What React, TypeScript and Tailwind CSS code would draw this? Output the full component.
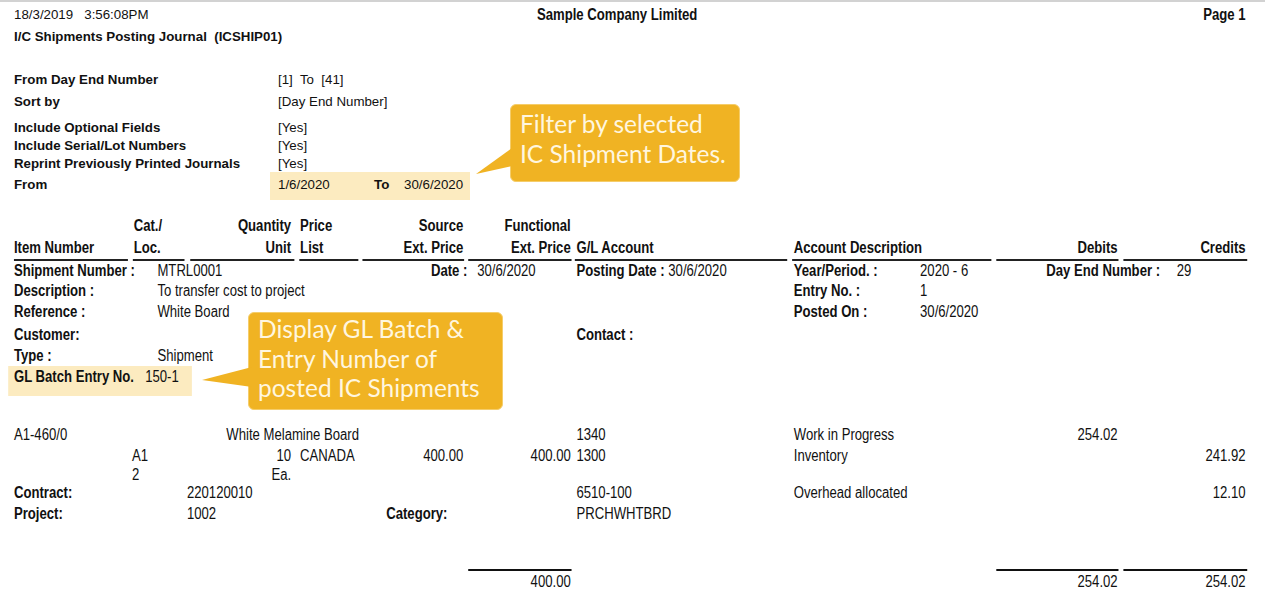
import { clsx } from 'clsx'
import type { ReactNode } from 'react'

// The journal table is set in a narrow face: the block is laid out at 1/0.82 of the
// page width and squeezed back with scale-x, so every x below is reference x / 0.82.
const COLS = [
  'w-[139px] mr-[6px] text-left',
  'w-[63px] mr-[7px] text-left pl-[1px]',
  'w-[127px] mr-[6px] text-right pr-[4px]',
  'w-[72px] mr-[5px] text-left pl-[1px]',
  'w-[124px] mr-[5px] text-right pr-[1px]',
  'w-[126px] mr-[4px] text-right pr-[1px]',
  'w-[259px] mr-[6px] text-left pl-[2px]',
  'w-[243px] mr-[6px] text-left pl-[2px]',
  'w-[149px] mr-[6px] text-right pr-[1px]',
  'w-[151px] text-right pr-[2px]',
]

const HEADER: [string, string][] = [
  ['\u00a0', 'Item Number'],
  ['Cat./', 'Loc.'],
  ['Quantity', 'Unit'],
  ['Price', 'List'],
  ['Source', 'Ext. Price'],
  ['Functional', 'Ext. Price'],
  ['\u00a0', 'G/L Account'],
  ['\u00a0', 'Account Description'],
  ['\u00a0', 'Debits'],
  ['\u00a0', 'Credits'],
]

function B({ children }: { children: ReactNode }) {
  return <span className="font-bold">{children}</span>
}

function Cols({ cells, className, lines = [] }: { cells: ReactNode[]; className?: string; lines?: number[] }) {
  return (
    <div className={clsx('flex shrink-0 pl-[17px] leading-[18px]', className)}>
      {COLS.map((col, i) => (
        <div
          key={i}
          className={clsx(col, 'shrink-0 whitespace-nowrap', lines.includes(i) && 'border-t-2 border-[#111] pt-[2px]')}
        >
          {cells[i] ?? ''}
        </div>
      ))}
    </div>
  )
}

function Param({ label, children, className }: { label: string; children: ReactNode; className?: string }) {
  return (
    <div className={clsx('flex shrink-0 pl-[14px]', className)}>
      <div className="w-[264px] font-bold">{label}</div>
      <div className="whitespace-pre">{children}</div>
    </div>
  )
}

function Callout({ lines, className }: { lines: string[]; className: string }) {
  return (
    <div
      className={clsx(
        'absolute rounded-[6px] border border-[#f5cd6a] bg-[#f0b323] pl-[9px] font-["Lato",sans-serif] text-[24.5px] leading-[29.5px] text-[#fff6df]',
        className,
      )}
    >
      {lines.map((line) => (
        <div key={line} className="whitespace-nowrap">
          {line}
        </div>
      ))}
    </div>
  )
}

export default function App() {
  return (
    <div className="relative flex h-[591px] w-[1265px] flex-col overflow-hidden bg-white text-[#111]">
      <div className="h-[2px] shrink-0 bg-[#d2d2d2]" />

      {/* report heading */}
      <div className="flex h-[26px] shrink-0 items-start pt-[4px] pl-[14px] pr-[19px] leading-[18px]">
        <div className="w-[523px] whitespace-pre font-['Liberation_Sans',sans-serif] text-[13.3px]">18/3/2019   3:56:08PM</div>
        <div className="font-['Liberation_Sans',sans-serif] text-[16px] font-bold">
          <span className="inline-block origin-left scale-x-[0.82] whitespace-nowrap">Sample Company Limited</span>
        </div>
        <div className="flex-1 text-right font-['Liberation_Sans',sans-serif] text-[16px] font-bold">
          <span className="inline-block origin-right scale-x-[0.82]">Page 1</span>
        </div>
      </div>

      <div className="flex shrink-0 flex-col font-['Liberation_Sans',sans-serif] text-[13.3px] leading-[18px]">
        <div className="h-[43px] whitespace-pre pl-[14px] font-bold">I/C Shipments Posting Journal  (ICSHIP01)</div>
        <Param label="From Day End Number" className="h-[22px]">
          [1]  To  [41]
        </Param>
        <Param label="Sort by" className="h-[26px]">
          [Day End Number]
        </Param>
        <Param label="Include Optional Fields" className="h-[18px]">
          [Yes]
        </Param>
        <Param label="Include Serial/Lot Numbers" className="h-[18px]">
          [Yes]
        </Param>
        <Param label="Reprint Previously Printed Journals" className="h-[17px]">
          [Yes]
        </Param>
        <div className="flex h-[43px] shrink-0 pl-[14px]">
          <div className="w-[256px] pt-[4px] font-bold">From</div>
          <div className="flex h-[28px] w-[200px] bg-[#fcebc0] pt-[4px] pl-[8px]">
            <span className="w-[96px]">1/6/2020</span>
            <span className="w-[30px] font-bold">To</span>
            <span>30/6/2020</span>
          </div>
        </div>
      </div>

      {/* journal table */}
      <div className="flex w-[1543px] shrink-0 origin-top-left scale-x-[0.82] flex-col font-['Liberation_Sans',sans-serif] text-[16px]">
        <div className="flex h-[47px] shrink-0 pl-[17px] font-bold leading-[22px]">
          {HEADER.map(([top, bottom], i) => (
            <div key={i} className={clsx(COLS[i], 'h-[46px] shrink-0 whitespace-nowrap border-b-2 border-[#222]')}>
              <div>{top}</div>
              <div>{bottom}</div>
            </div>
          ))}
        </div>

        <Cols
          className="h-[20px]"
          cells={[
            <B>Shipment Number :</B>,
            <span className="pl-[29px]">MTRL0001</span>,
            '',
            '',
            <div className="-mr-[5px] font-bold">Date :</div>,
            <div className="pl-[11px] text-left">30/6/2020</div>,
            <span>
              <B>Posting Date :</B> 30/6/2020
            </span>,
            <div className="flex">
              <span className="w-[154px] font-bold">Year/Period. :</span>
              <span>2020 - 6</span>
            </div>,
            <div className="pl-[61px] text-left font-bold">Day End Number :</div>,
            <div className="pl-[65px] text-left">29</div>,
          ]}
        />
        <Cols
          className="h-[21px]"
          cells={[
            <B>Description :</B>,
            <span className="pl-[29px]">To transfer cost to project</span>,
            '',
            '',
            '',
            '',
            '',
            <div className="flex">
              <span className="w-[154px] font-bold">Entry No. :</span>
              <span>1</span>
            </div>,
          ]}
        />
        <Cols
          className="h-[23px]"
          cells={[
            <B>Reference :</B>,
            <span className="pl-[29px]">White Board</span>,
            '',
            '',
            '',
            '',
            '',
            <div className="flex">
              <span className="w-[154px] font-bold">Posted On :</span>
              <span>30/6/2020</span>
            </div>,
          ]}
        />
        <Cols className="h-[21px]" cells={[<B>Customer:</B>, '', '', '', '', '', <B>Contact :</B>]} />
        <Cols className="h-[19px]" cells={[<B>Type :</B>, <span className="pl-[29px]">Shipment</span>]} />

        <div className="h-[60px] shrink-0 pl-[10px] leading-[18px]">
          <div className="flex h-[30px] w-[224px] bg-[#fcebc0] pt-[2px] pl-[7px]">
            <span className="w-[160px] font-bold">GL Batch Entry No.</span>
            <span>150-1</span>
          </div>
        </div>

        <Cols
          className="h-[21px]"
          cells={[
            'A1-460/0',
            '',
            <div className="pl-[44px] text-left">White Melamine Board</div>,
            '',
            '',
            '',
            '1340',
            'Work in Progress',
            '254.02',
          ]}
        />
        <Cols
          className="h-[19px]"
          cells={[
            '',
            <span className="-ml-[2px]">A1</span>,
            '10',
            'CANADA',
            '400.00',
            '400.00',
            '1300',
            'Inventory',
            '',
            '241.92',
          ]}
        />
        <Cols className="h-[18px]" cells={['', <span className="-ml-[2px]">2</span>, 'Ea.']} />
        <Cols
          className="h-[21px]"
          cells={[
            <B>Contract:</B>,
            <span className="pl-[65px]">220120010</span>,
            '',
            '',
            '',
            '',
            '6510-100',
            'Overhead allocated',
            '',
            '12.10',
          ]}
        />
        <Cols
          className="h-[64px]"
          cells={[
            <B>Project:</B>,
            <span className="pl-[65px]">1002</span>,
            '',
            '',
            <div className="pl-[29px] text-left font-bold">Category:</div>,
            '',
            'PRCHWHTBRD',
          ]}
        />
        <Cols
          className="h-[24px]"
          lines={[5, 8, 9]}
          cells={['', '', '', '', '', '400.00', '', '', '254.02', '254.02']}
        />
      </div>

      {/* annotation callouts over the report */}
      <Callout className="top-[104px] left-[510px] h-[78px] w-[230px] pt-[4px]" lines={['Filter by selected', 'IC Shipment Dates.']} />
      <svg className="absolute top-[145px] left-[470px]" width="46" height="40" viewBox="0 0 46 40">
        <polygon points="42,3 6,29 42,21" fill="#f0b323" />
      </svg>
      <Callout
        className="top-[312px] left-[248px] h-[98px] w-[255px] pt-[1px]"
        lines={['Display GL Batch &', 'Entry Number of', 'posted IC Shipments']}
      />
      <svg className="absolute top-[362px] left-[198px]" width="58" height="30" viewBox="0 0 58 30">
        <polygon points="54,5 4,18 54,25" fill="#f0b323" />
      </svg>
    </div>
  )
}
